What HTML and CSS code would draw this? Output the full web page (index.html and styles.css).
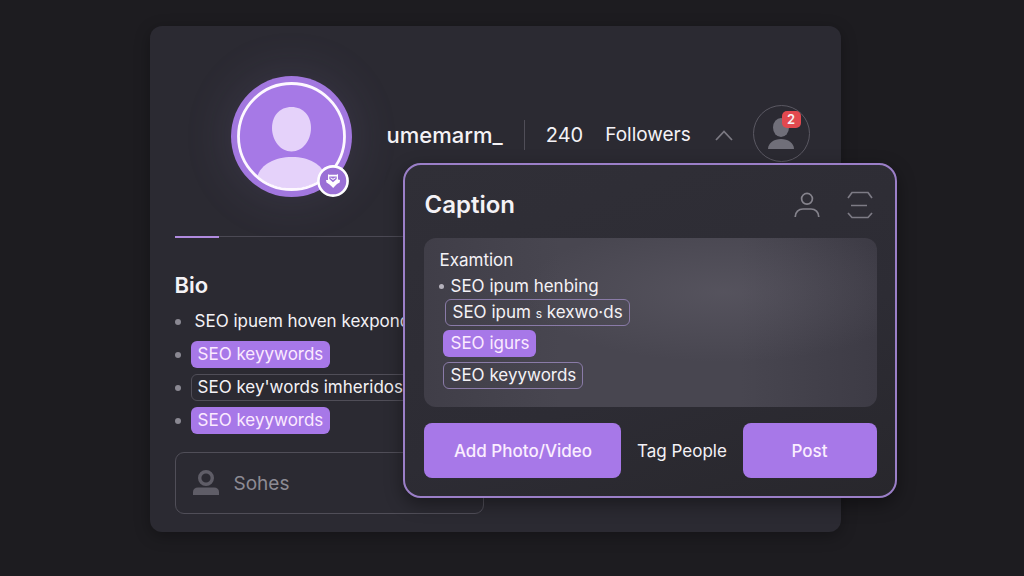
FILE: index.html
```html
<!DOCTYPE html>
<html lang="en">
<head>
    <meta charset="UTF-8">
    <meta name="viewport" content="width=device-width, initial-scale=1.0">
    <title>Profile</title>
    <link rel="stylesheet" href="styles.css">
</head>

<body>
    <main class="stage">
        <section class="profile-card">
            <header class="profile-header">
                <div class="avatar">
                    <svg class="avatar-picture" viewBox="0 0 121 121" aria-hidden="true">
                        <defs>
                            <clipPath id="ring"><circle cx="60.500" cy="60.500" r="52"/></clipPath>
                        </defs>
                        <circle cx="60.500" cy="60.500" r="60.500" fill="#a277df"/>
                        <circle cx="60.500" cy="60.500" r="53" fill="#a679e6"/>
                        <g clip-path="url(#ring)" fill="#e5d2fa">
                            <path d="M60.500 31c12 0 19.500 9 19.500 21s-8 23.500-19.500 23.500S41 64 41 52s7.500-21 19.500-21z"/>
                            <path d="M26 101c4-13 18-20 35-20s30 7 34 20v16H26z"/>
                        </g>
                        <circle cx="60.500" cy="60.500" r="53" fill="none" stroke="#fdf8ff" stroke-width="2.800"/>
                    </svg>
                    <svg class="avatar-badge" viewBox="0 0 32 32" aria-hidden="true">
                        <circle cx="16" cy="16" r="14.600" fill="#9a70d6" stroke="#fff" stroke-width="2.600"/>
                        <path fill="#fff" d="M11 9l.8.700h7.800L21 9v5.500l2 .5-.3 2.500-2.700 1.500-2 2-1.800 2-2-2-2-1.800-2.700-1.700-.5-2.500L11 15z"/>
                        <path fill="#9a70d6" d="M12.300 11.500h7.400v2.500L16 17.200 12.300 14z"/>
                        <path fill="#fff" d="M13.500 12.300l2.500 1.400 2.500-1.400v1l-2.500 1.600-2.500-1.600z"/>
                    </svg>
                </div>
                <h1 class="username">umemarm_</h1>
                <p class="followers"><span class="number">240</span> <span>Followers</span></p>
                <button class="icon-button toggle" aria-label="Collapse">
                    <svg width="18" height="12" viewBox="0 0 18 12"><path d="M1 11l8-8.500 8 8.500" fill="none" stroke="#7b7982" stroke-width="1.800"/></svg>
                </button>
                <button class="account" aria-label="Account">
                    <svg width="26" height="32" viewBox="0 0 26 32" fill="#706f79"><ellipse cx="13" cy="9.500" rx="8" ry="9.500"/><path d="M0 31c0-6 6-10 13-10s13 4 13 10z"/></svg>
                    <span class="count">2</span>
                </button>
            </header>

            <div class="tabs"></div>

            <h2 class="bio-title">Bio</h2>
            <ul class="bio-list">
                <li><span class="plain">SEO ipuem hoven kexpond</span></li>
                <li><span class="chip chip-filled">SEO keyywords</span></li>
                <li><span class="chip chip-dim">SEO key'words imheridos</span></li>
                <li><span class="chip chip-filled">SEO keyywords</span></li>
            </ul>

            <label class="search">
                <svg width="26" height="26" viewBox="0 0 26 26" aria-hidden="true"><circle cx="13" cy="8" r="6.300" fill="none" stroke="#5f5d67" stroke-width="3.400"/><path fill="#5f5d67" d="M0 25v-3c0-3 2-4.500 5-4.500h16c3 0 5 1.500 5 4.500v3z"/></svg>
                <input type="text" placeholder="Sohes" aria-label="Sohes">
            </label>
        </section>

        <section class="dialog" role="dialog" aria-labelledby="caption-title">
            <header class="dialog-header">
                <h2 id="caption-title" class="dialog-title">Caption</h2>
                <button class="icon-button" aria-label="People">
                    <svg width="26" height="26" viewBox="0 0 26 26" fill="none" stroke="#85838c" stroke-width="1.700"><circle cx="13" cy="6.800" r="5.400"/><path d="M1.200 25c0-5 3.500-8 7.800-8h8c4.300 0 7.800 3 7.800 8"/></svg>
                </button>
                <button class="icon-button" aria-label="Menu">
                    <svg width="26" height="28" viewBox="0 0 26 28" fill="none" stroke="#7d7b85" stroke-width="1.700"><path d="M1 7l4-5.500h16L25 7M4 14.500h16M1 22l4 4.500h16l4-4.500"/></svg>
                </button>
            </header>

            <div class="caption-box">
                <p class="line">Examtion</p>
                <p class="line line-bullet">SEO ipum henbing</p>
                <span class="chip chip-outline chip-indent">SEO ipum <small>s</small> kexwo·ds</span>
                <span class="chip chip-filled">SEO igurs</span>
                <span class="chip chip-outline">SEO keyywords</span>
            </div>

            <footer class="actions">
                <button class="button-main button-media">Add Photo/Video</button>
                <button class="button-text">Tag People</button>
                <button class="button-main button-post">Post</button>
            </footer>
        </section>
    </main>
</body>
</html>
```
FILE: styles.css
```css
:root {
    --page: #1d1c20;
    --card: #2b2a32;
    --purple: #a778e8;
    --line: #504e58;
    --text: #f4f2f6;
}

* {
    margin: 0;
    padding: 0;
    box-sizing: border-box;
}

body {
    padding-left: 22px;
    background: var(--page);
    color: var(--text);
    font-family: Inter, "Liberation Sans", sans-serif;
    font-size: 17px;
}

button,
input {
    font: inherit;
    color: inherit;
    background: none;
    border: none;
}

button {
    cursor: pointer;
}

svg {
    display: block;
}

.stage {
    position: relative;
    max-width: 747px;
    margin: 26px auto 44px;
}

.profile-card {
    margin-right: 56px;
    padding: 50px 25px 18px;
    background: var(--card);
    border-radius: 12px;
    box-shadow: 0 4px 16px rgba(0, 0, 0, 0.3);
}

/* Header */
.profile-header {
    display: flex;
    align-items: center;
    padding: 0 6px 0 56px;
}

.avatar {
    position: relative;
    flex: none;
    width: 121px;
    height: 121px;
    margin-right: 35px;
    border-radius: 50%;
    box-shadow: 0 0 50px rgba(150, 130, 190, 0.16);
}

.avatar-badge {
    position: absolute;
    right: 3px;
    bottom: 0;
    width: 32px;
    height: 32px;
}

.username,
.followers,
.toggle {
    margin-bottom: 4px;
}

.username {
    font-size: 22px;
    font-weight: 500;
}

.followers {
    display: flex;
    align-items: center;
    gap: 22px;
    height: 30px;
    margin-left: 21px;
    padding-left: 21px;
    border-left: 1px solid var(--line);
    font-size: 19px;
}

.number {
    font-size: 20px;
}

.toggle {
    margin-left: 24px;
}

.account {
    position: relative;
    display: flex;
    justify-content: center;
    align-items: center;
    width: 57px;
    height: 57px;
    margin-bottom: 6px;
    margin-left: auto;
    border: 1px solid #5a5862;
    border-radius: 50%;
}

.count {
    position: absolute;
    top: 5px;
    right: 8px;
    width: 19px;
    height: 17px;
    border-radius: 5px;
    background: #e2494f;
    font-size: 13px;
    font-weight: 600;
    line-height: 17px;
}

/* Bio */
.tabs {
    height: 2px;
    margin-top: 39px;
    background:
        linear-gradient(#b08adf, #b08adf) left / 44px 2px no-repeat,
        linear-gradient(#4b4954, #4b4954) top / 100% 1px no-repeat;
}

.bio-title {
    margin-top: 33px;
    font-size: 22px;
    font-weight: 600;
    line-height: 28px;
}

.bio-list {
    display: grid;
    gap: 6px;
    margin-top: 9px;
    list-style: none;
}

.bio-list li {
    display: flex;
    align-items: center;
    gap: 10px;
    white-space: nowrap;
}

.bio-list li::before {
    content: "";
    width: 6px;
    height: 6px;
    border-radius: 50%;
    background: #8a8892;
}

.plain {
    padding-left: 4px;
    line-height: 27px;
}

.chip {
    padding: 0 6px;
    border: 1px solid transparent;
    border-radius: 6px;
    line-height: 25px;
}

.chip-filled {
    background: var(--purple);
    color: #fbeaff;
}

.chip-dim {
    border-color: var(--line);
}

.chip-outline {
    border-color: #8a7ba8;
}

.search {
    display: flex;
    align-items: center;
    gap: 15px;
    width: 309px;
    height: 62px;
    margin-top: 18px;
    padding: 0 17px;
    border: 1px solid var(--line);
    border-radius: 9px;
}

.search input {
    flex: 1;
    min-width: 0;
    font-size: 19px;
}

.search input::placeholder {
    color: #8d8b94;
}

/* Caption dialog */
.dialog {
    position: absolute;
    top: 137px;
    right: 0;
    width: 66%;
    padding: 24px 18px 18px 19px;
    background: linear-gradient(160deg, #302f37, #2d2c34 60%, #28272c);
    border: 2px solid #9b7fc8;
    border-radius: 18px;
    box-shadow: 0 6px 18px rgba(0, 0, 0, 0.4);
}

.dialog-header {
    display: flex;
    align-items: center;
    gap: 27px;
    padding-right: 4px;
}

.dialog-title {
    margin-right: auto;
    font-size: 24px;
    font-weight: 600;
    line-height: 32px;
}

.caption-box {
    display: flex;
    flex-direction: column;
    align-items: flex-start;
    height: 169px;
    margin-top: 17px;
    padding: 9px 19px 0;
    border-radius: 12px;
    background:
        radial-gradient(ellipse 200px 70px at 66% 32%, rgba(120, 116, 128, 0.28), transparent),
        linear-gradient(to right, #403e48, #484650 30%, #484650 70%, #3d3b45);
}

.line {
    margin-left: -4px;
    line-height: 26px;
}

.line-bullet {
    display: flex;
    align-items: center;
    gap: 6px;
}

.line-bullet::before {
    content: "";
    width: 5px;
    height: 5px;
    border-radius: 50%;
    background: #b5b2bc;
}

.caption-box .chip-filled {
    margin: 4px 0 5px;
}

.chip-indent {
    margin-left: 2px;
}

.chip small {
    font-size: 12px;
    line-height: 1;
}

.actions {
    display: flex;
    align-items: center;
    justify-content: space-between;
    margin-top: 16px;
}

.button-main {
    height: 55px;
    border-radius: 8px;
    background: var(--purple);
    color: #fbeeff;
    font-weight: 500;
}

.button-media {
    width: 197px;
}

.button-post {
    width: 134px;
}
```
